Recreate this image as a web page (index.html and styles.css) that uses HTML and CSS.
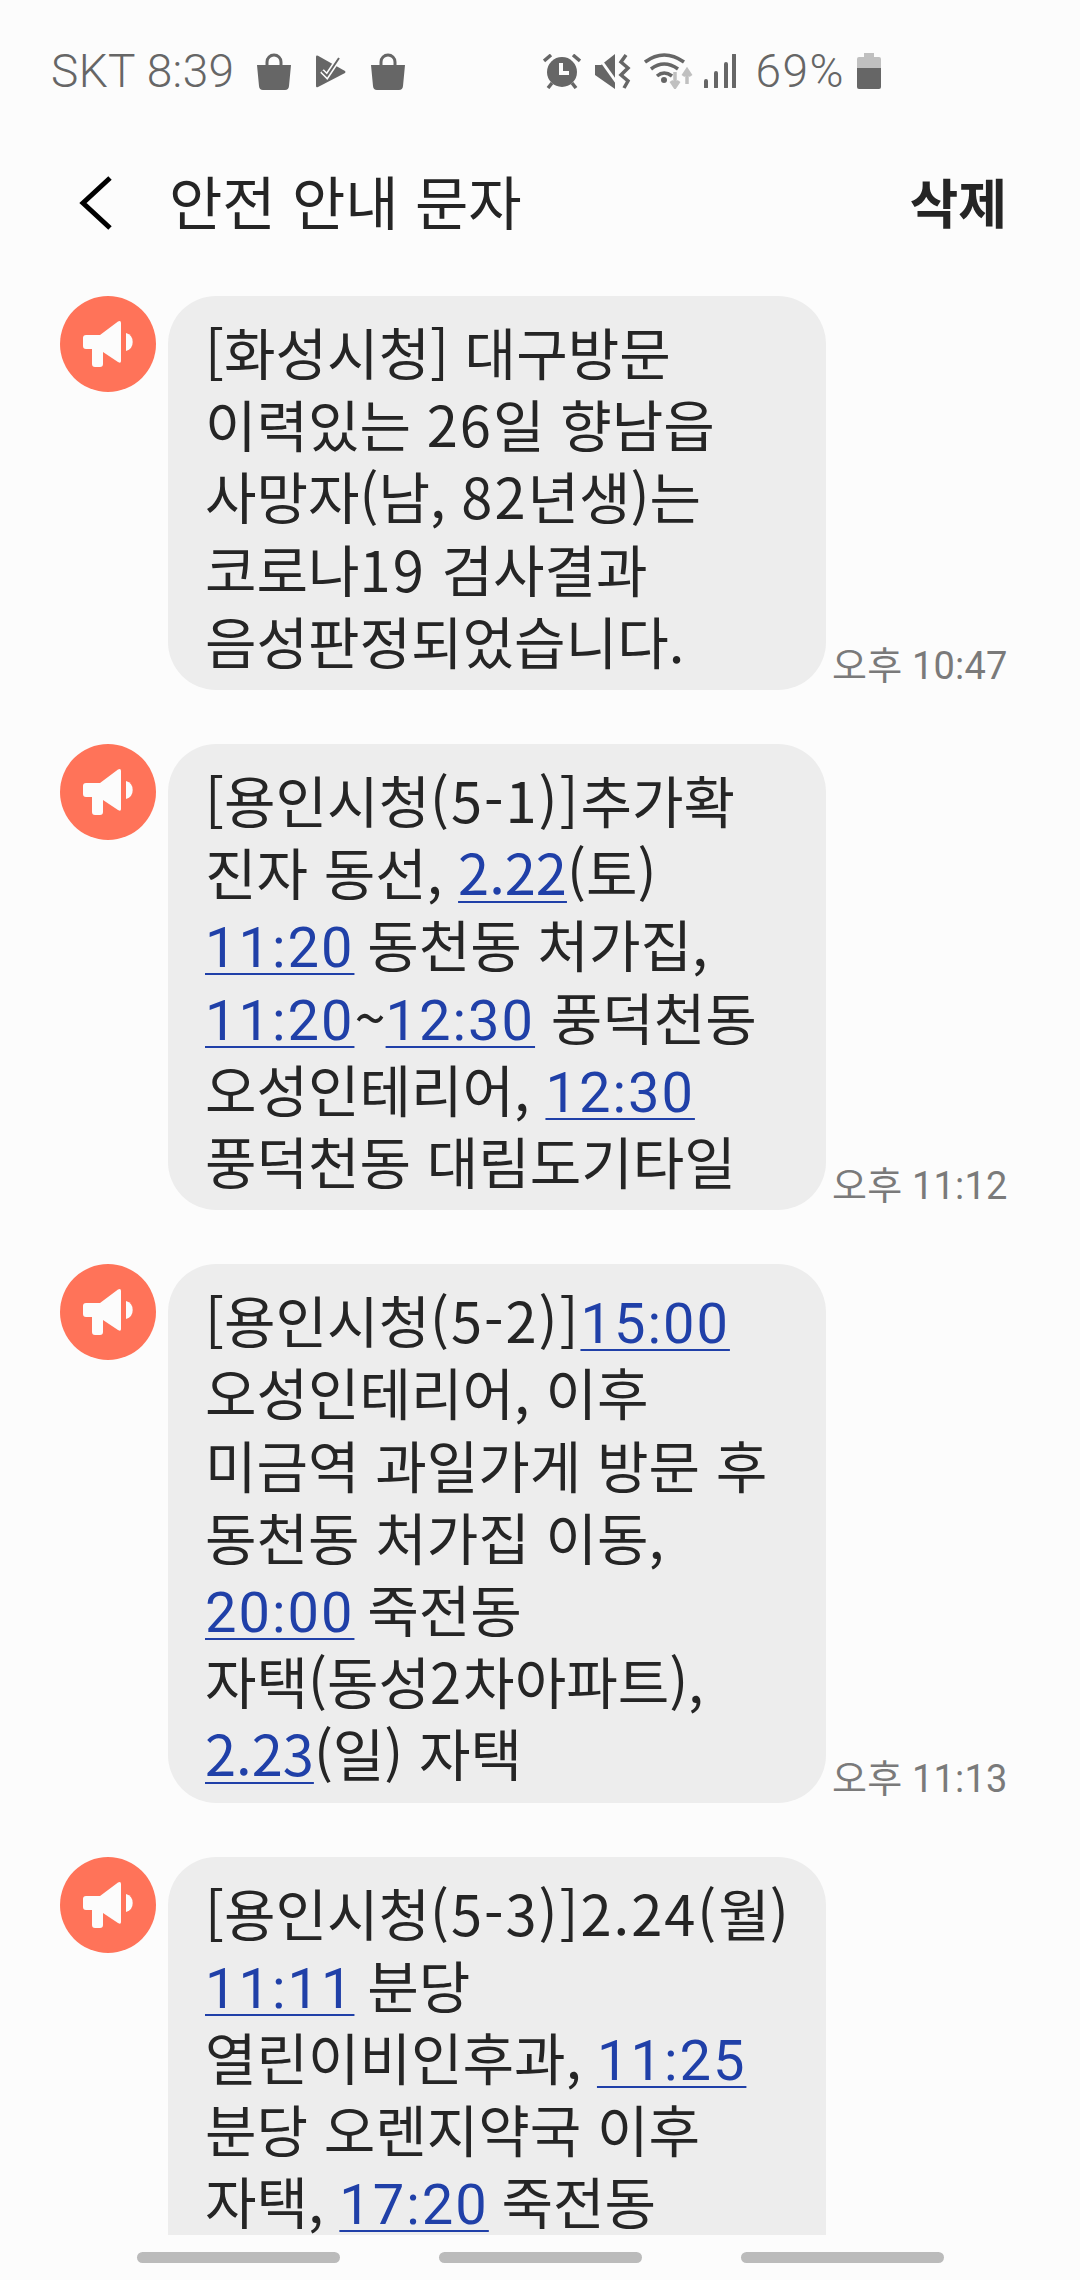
FILE: index.html
```html
<!DOCTYPE html>
<html lang="ko">
    <head>
        <meta charset="UTF-8" />
        <meta name="viewport" content="width=device-width, initial-scale=1.0" />
        <title>안전 안내 문자</title>
        <link rel="stylesheet" href="styles.css">
    </head>
    <body>
        <div class="page">
            <!-- status bar -->
            <div class="status">
                <span class="status-text carrier">SKT 8:39</span>
                <svg class="ic-bag" viewBox="0 0 34 37"><path d="M10 12V9a7 7 0 0 1 14 0v3" fill="none" stroke="#666" stroke-width="3"/><path d="M0 12H34L32 33Q31.700 37 28 37H6Q2.300 37 2 33Z" fill="#666"/></svg>
                <svg class="ic-play" viewBox="0 0 30 33"><path d="M0 2Q0 0 2 .8L29 16Q30 17 29 18L2 32Q0 33 0 31Z" fill="#666"/><path d="M6 16L11 21L23 3" fill="none" stroke="#fcfcfc" stroke-width="5"/><path d="M6 16L11 21L23 3" fill="none" stroke="#666" stroke-width="2"/></svg>
                <svg class="ic-bag" viewBox="0 0 34 37"><path d="M10 12V9a7 7 0 0 1 14 0v3" fill="none" stroke="#666" stroke-width="3"/><path d="M0 12H34L32 33Q31.700 37 28 37H6Q2.300 37 2 33Z" fill="#666"/></svg>
                <div class="status-right">
                    <svg class="ic-alarm" viewBox="0 0 38 35"><circle cx="19" cy="18" r="15" fill="#666"/><path d="M18 9V19H26" fill="none" stroke="#fcfcfc" stroke-width="4"/><path d="M1 7L8 1M37 7L30 1M5 34L9 29M33 34L29 29" stroke="#666" stroke-width="3.500" fill="none"/></svg>
                    <svg class="ic-mute" viewBox="0 0 36 35"><path d="M0 11H6L20 0V35L0 21Z" fill="#666"/><path d="M2 1L22 29" stroke="#fcfcfc" stroke-width="3"/><path d="M31 1L26 8L33 14L26 21L33 27L29 34" fill="none" stroke="#666" stroke-width="3.500"/></svg>
                    <svg class="ic-wifi" viewBox="0 0 49 36"><path d="M1 9Q20 -5 40 9M7 16Q20 6 34 16M13 23Q20 17 28 23" fill="none" stroke="#666" stroke-width="3.500"/><circle cx="20" cy="27" r="3" fill="#666"/><path d="M31 19V33M27 28L31 34L35 28" fill="none" stroke="#c0c0c0" stroke-width="3.500"/><path d="M43 31V18M39 23L43 17L47 23" fill="none" stroke="#c0c0c0" stroke-width="3.500"/></svg>
                    <svg class="ic-signal" viewBox="0 0 32 34"><path d="M2 27V33M12 19V33M22 10V33M30 1V33" stroke="#666" stroke-width="4" stroke-linecap="round" fill="none"/></svg>
                    <span class="status-text pct">69%</span>
                    <svg class="ic-battery" viewBox="0 0 24 36"><path d="M7 0H17V4H22Q24 4 24 6V15H0V6Q0 4 2 4H7Z" fill="#c0c0c0"/><path d="M0 15H24V34Q24 36 22 36H2Q0 36 0 34Z" fill="#666"/></svg>
                </div>
            </div>

            <!-- header -->
            <div class="header">
                <svg class="back" viewBox="0 0 34 54"><path d="M31 2L4 27L31 52" fill="none" stroke="#000" stroke-width="5"/></svg>
                <div class="title">안전 안내 문자</div>
                <div class="delete">삭제</div>
            </div>

            <!-- messages -->
            <div class="list">
                <div class="msg">
                    <svg class="avatar" viewBox="0 0 96 96"><circle cx="48" cy="48" r="48" fill="#ff7359"/><path d="M26 39H40L58 25.500Q61 24 61 27V65Q61 68 58 66L43 56V68Q43 71 40 71H35Q32 71 32 68V53H26Q23 53 23 50V42Q23 39 26 39Z" fill="#fcfcfc"/><path d="M66 37A9.400 9.400 0 0 1 66 55Z" fill="#fcfcfc"/></svg>
                    <div class="bubble">
                        <div>[화성시청] 대구방문</div>
                        <div>이력있는 <span class="num">26</span>일 향남읍</div>
                        <div>사망자(남, <span class="num">82</span>년생)는</div>
                        <div>코로나<span class="num">19</span> 검사결과</div>
                        <div>음성판정되었습니다.</div>
                    </div>
                    <div class="time">오후 10:47</div>
                </div>
                <div class="msg">
                    <svg class="avatar" viewBox="0 0 96 96"><circle cx="48" cy="48" r="48" fill="#ff7359"/><path d="M26 39H40L58 25.500Q61 24 61 27V65Q61 68 58 66L43 56V68Q43 71 40 71H35Q32 71 32 68V53H26Q23 53 23 50V42Q23 39 26 39Z" fill="#fcfcfc"/><path d="M66 37A9.400 9.400 0 0 1 66 55Z" fill="#fcfcfc"/></svg>
                    <div class="bubble">
                        <div>[용인시청<span class="num">(5-1)]</span>추가확</div>
                        <div>진자 동선, <a>2.22</a>(토)</div>
                        <div><a class="clock tail">11:20</a> 동천동 처가집,</div>
                        <div><a class="clock">11:20</a>~<a class="clock">12:30</a> 풍덕천동</div>
                        <div>오성인테리어, <a class="clock">12:30</a></div>
                        <div>풍덕천동 대림도기타일</div>
                    </div>
                    <div class="time">오후 11:12</div>
                </div>
                <div class="msg">
                    <svg class="avatar" viewBox="0 0 96 96"><circle cx="48" cy="48" r="48" fill="#ff7359"/><path d="M26 39H40L58 25.500Q61 24 61 27V65Q61 68 58 66L43 56V68Q43 71 40 71H35Q32 71 32 68V53H26Q23 53 23 50V42Q23 39 26 39Z" fill="#fcfcfc"/><path d="M66 37A9.400 9.400 0 0 1 66 55Z" fill="#fcfcfc"/></svg>
                    <div class="bubble">
                        <div>[용인시청<span class="num">(5-2)]</span><a class="clock">15:00</a></div>
                        <div>오성인테리어, 이후</div>
                        <div>미금역 과일가게 방문 후</div>
                        <div>동천동 처가집 이동,</div>
                        <div><a class="clock tail">20:00</a> 죽전동</div>
                        <div>자택(동성<span class="num">2</span>차아파트),</div>
                        <div><a>2.23</a>(일) 자택</div>
                    </div>
                    <div class="time">오후 11:13</div>
                </div>
                <div class="msg">
                    <svg class="avatar" viewBox="0 0 96 96"><circle cx="48" cy="48" r="48" fill="#ff7359"/><path d="M26 39H40L58 25.500Q61 24 61 27V65Q61 68 58 66L43 56V68Q43 71 40 71H35Q32 71 32 68V53H26Q23 53 23 50V42Q23 39 26 39Z" fill="#fcfcfc"/><path d="M66 37A9.400 9.400 0 0 1 66 55Z" fill="#fcfcfc"/></svg>
                    <div class="bubble">
                        <div>[용인시청<span class="num">(5-3)]2.24(</span>월)</div>
                        <div><a class="clock tail">11:11</a> 분당</div>
                        <div>열린이비인후과, <a class="clock">11:25</a></div>
                        <div>분당 오렌지약국 이후</div>
                        <div>자택, <a class="clock tail">17:20</a> 죽전동</div>
                        <div>&nbsp;</div>
                    </div>
                </div>
            </div>

            <!-- nav bar -->
            <div class="nav">
                <div class="nav-bar"></div>
                <div class="nav-bar"></div>
                <div class="nav-bar"></div>
            </div>
        </div>
    </body>
</html>
```

FILE: styles.css
```css
* {
    margin: 0;
    padding: 0;
    box-sizing: border-box;
}
body {
    background-color: #fcfcfc;
    font-family: "Noto Sans CJK KR", "Noto Sans", sans-serif;
    color: #252525;
}
.page {
    width: 1080px;
    height: 2280px;
    display: flex;
    flex-direction: column;
    overflow: hidden;
}

.status {
    height: 142px;
    flex-shrink: 0;
    padding-left: 51px;
    display: flex;
    align-items: center;
    color: #666;
}
.status-text {
    font-family: Roboto, sans-serif;
    font-weight: 300;
    font-size: 46px;
}
.carrier {
    letter-spacing: 0.4px;
}
.ic-bag {
    width: 34px;
    height: 37px;
    margin-left: 22px;
}
.ic-play {
    width: 30px;
    height: 33px;
    margin-left: 25px;
}
.ic-play + .ic-bag {
    margin-left: 25px;
}
.status-right {
    margin-left: auto;
    margin-right: 199px;
    display: flex;
    align-items: center;
}
.ic-alarm {
    width: 38px;
    height: 35px;
}
.ic-mute {
    width: 36px;
    height: 35px;
    margin-left: 14px;
}
.ic-wifi {
    width: 49px;
    height: 36px;
    margin-left: 13px;
}
.ic-signal {
    width: 32px;
    height: 34px;
    margin-left: 11px;
}
.status-right .pct {
    margin-left: 19px;
    letter-spacing: 1.500px;
}
.ic-battery {
    width: 24px;
    height: 36px;
    margin-left: 12px;
}

.header {
    height: 122px;
    flex-shrink: 0;
    padding: 0 73px 0 79px;
    display: flex;
    align-items: center;
}
.back {
    width: 34px;
    height: 54px;
}
.title {
    margin-left: 56px;
    margin-top: -6px;
    font-size: 58px;
}
.delete {
    margin-left: auto;
    margin-top: -4px;
    font-size: 53px;
    font-weight: 700;
}

.list {
    flex: 1;
    min-height: 0;
    overflow: hidden;
    padding: 32px 0 0 60px;
    display: flex;
    flex-direction: column;
    gap: 54px;
}
.msg {
    display: flex;
    flex-shrink: 0;
}
.avatar {
    width: 96px;
    height: 96px;
    flex-shrink: 0;
}
.bubble {
    width: 658px;
    margin-left: 12px;
    padding: 19px 20px 14px 37px;
    background-color: #ededed;
    border-radius: 48px;
    font-size: 56px;
    line-height: 72.200px;
    white-space: nowrap;
}
.bubble a {
    color: #2040a8;
    text-decoration: underline;
    text-decoration-thickness: 2px;
    text-underline-offset: 6px;
}
.bubble .clock {
    font-family: Roboto, "Noto Sans CJK KR", sans-serif;
    line-height: 1;
    letter-spacing: 2px;
}
.bubble .tail {
    margin-right: -3px;
}
.bubble .num {
    letter-spacing: 2px;
}
.time {
    align-self: flex-end;
    margin-left: 6px;
    font-family: Roboto, "Noto Sans CJK KR", sans-serif;
    font-size: 38px;
    line-height: 48px;
    letter-spacing: 0.2px;
    color: #7a7a7a;
    white-space: nowrap;
}

.nav {
    height: 45px;
    flex-shrink: 0;
    padding-top: 17px;
    display: flex;
    justify-content: center;
    gap: 99px;
}
.nav-bar {
    width: 203px;
    height: 11px;
    border-radius: 6px;
    background-color: #bbb;
}
```
